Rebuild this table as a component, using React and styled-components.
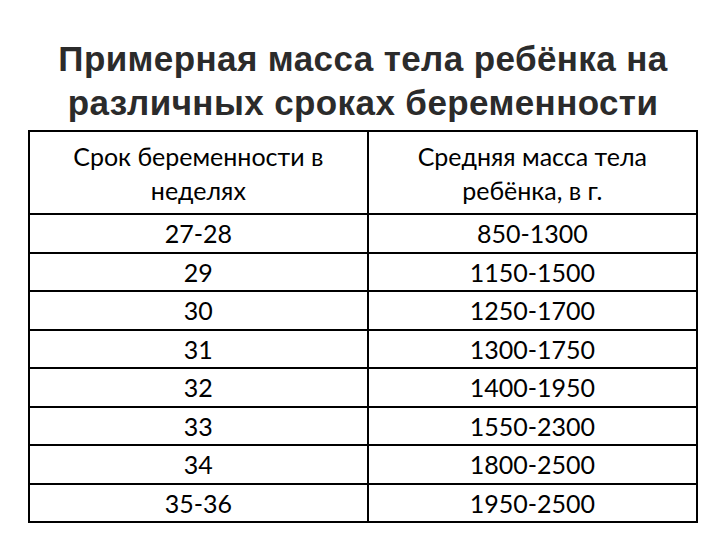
import React from 'react'
import styled, { createGlobalStyle } from 'styled-components'

const GlobalStyle = createGlobalStyle`
	html, body {
		margin: 0;
		padding: 0;
		background: #ffffff;
	}
`

const Slide = styled.div`
	width: 720px;
	height: 540px;
	box-sizing: border-box;
	padding-top: 37px;
	display: flex;
	flex-direction: column;
	align-items: center;
	background: #ffffff;
	overflow: hidden;
`

const Title = styled.h1`
	margin: 0;
	padding-left: 6px;
	font-family: "Liberation Sans", Arimo, Arial, sans-serif;
	font-weight: bold;
	font-size: 35px;
	line-height: 44px;
	letter-spacing: 0.4px;
	color: #2b2b2b;
	text-align: center;
`

const Table = styled.table`
	margin-top: 5px;
	margin-left: 6px;
	width: 670px;
	border-collapse: collapse;
	font-family: Lato, "Open Sans", sans-serif;
	color: #000000;
`

const HeadCell = styled.th`
	width: ${(props) => props.$width}px;
	height: 81px;
	padding: 0 10px;
	border: 2px solid #000000;
	font-weight: normal;
	font-size: 25px;
	line-height: 34px;
	text-align: center;
	vertical-align: middle;
`

const Cell = styled.td`
	height: 36.5px;
	padding: 0;
	border: 2px solid #000000;
	font-size: 25px;
	line-height: 30px;
	text-align: center;
	vertical-align: middle;
`

const rows = [
	['27-28', '850-1300'],
	['29', '1150-1500'],
	['30', '1250-1700'],
	['31', '1300-1750'],
	['32', '1400-1950'],
	['33', '1550-2300'],
	['34', '1800-2500'],
	['35-36', '1950-2500'],
]

const App = () => {
	return (
		<Slide>
			<GlobalStyle />
			<Title>
				Примерная масса тела ребёнка на
				<br />
				различных сроках беременности
			</Title>
			<Table>
				<thead>
					<tr>
						<HeadCell $width={336}>Срок беременности в неделях</HeadCell>
						<HeadCell $width={334}>Средняя масса тела ребёнка, в г.</HeadCell>
					</tr>
				</thead>
				<tbody>
					{rows.map(([week, mass]) => (
						<tr key={week}>
							<Cell>{week}</Cell>
							<Cell>{mass}</Cell>
						</tr>
					))}
				</tbody>
			</Table>
		</Slide>
	)
}

export default App
